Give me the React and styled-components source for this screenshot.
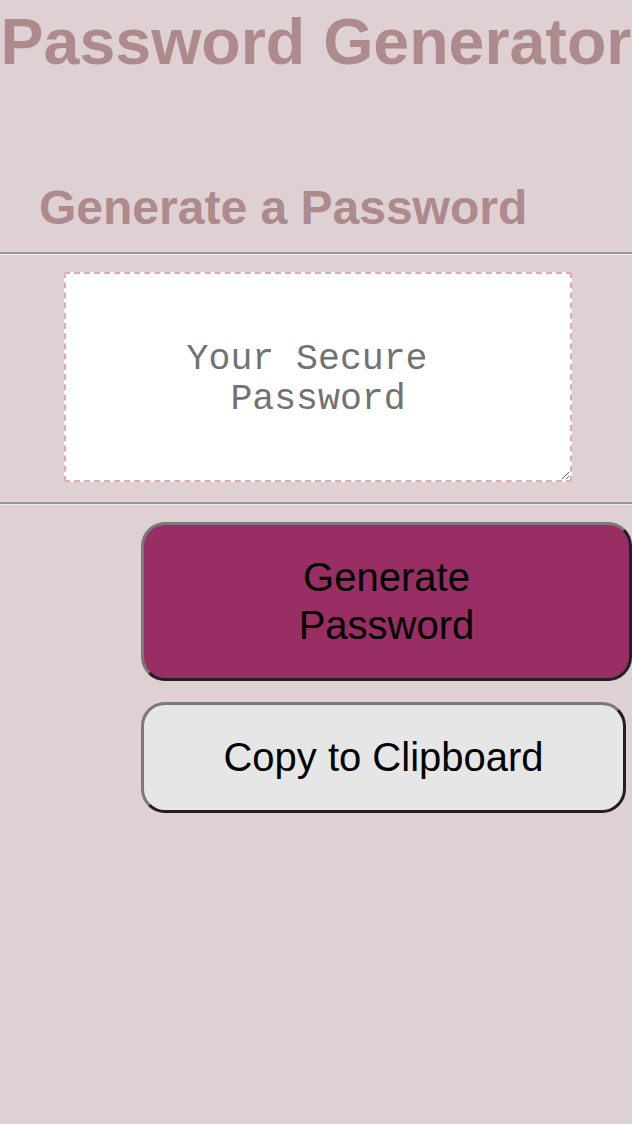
import React from "react";
import styled, { createGlobalStyle } from "styled-components";

const GlobalStyle = createGlobalStyle`
  *, *::before, *::after { box-sizing: border-box; }
  html, body { margin: 0; padding: 0; }
  body {
    background: #dfd1d3;
    font-family: "Liberation Sans", Arial, sans-serif;
    min-height: 1124px;
  }
`;

const Page = styled.div`
  display: flex;
  flex-direction: column;
`;

const Title = styled.h1`
  margin: 5px 0 0;
  font-size: 64.5px;
  font-weight: 700;
  text-align: center;
  color: #ad8a8b;
  white-space: nowrap;
`;

const Card = styled.section`
  margin-top: 101px;
  display: flex;
  flex-direction: column;
`;

const CardTitle = styled.h2`
  margin: 0 0 17px;
  padding-left: 39px;
  font-size: 48px;
  font-weight: 700;
  color: #ad8a8b;
`;

const Rule = styled.hr`
  margin: 0;
  height: 3px;
  width: 100%;
  border: none;
  border-top: 2px solid #9b9697;
  border-bottom: 1px solid #f1ecec;
`;

const Body = styled.div`
  padding: 17px 60px 20px 64px;
`;

const Output = styled.textarea`
  display: block;
  width: 508px;
  height: 210px;
  padding: 66px 40px 0;
  border: 2px dashed #e2abb2;
  border-radius: 2px;
  background: #ffffff;
  font-family: "Liberation Mono", "Courier New", monospace;
  font-size: 36.5px;
  line-height: 40px;
  text-align: center;
  color: #333;
  outline: none;
  &::placeholder { color: #727272; }
`;

const Footer = styled.div`
  display: flex;
  flex-direction: column;
  align-items: flex-start;
  gap: 21px;
  padding: 17px 0 0 141px;
`;

const Button = styled.button`
  width: ${(p) => p.$w}px;
  padding: 28px 30px 29px;
  border: 3px solid;
  border-color: #7c7778 #232022 #232022 #7c7778;
  border-radius: 24px;
  background: ${(p) => (p.$primary ? "#982e64" : "#e6e6e6")};
  color: #000;
  font-family: "Liberation Sans", Arial, sans-serif;
  font-size: 40px;
  line-height: 48px;
  text-align: center;
  cursor: pointer;
`;

export default function App() {
  return (
    <Page>
      <GlobalStyle />
      <Title>Password Generator</Title>
      <Card>
        <CardTitle>Generate a Password</CardTitle>
        <Rule />
        <Body>
          <Output
            readOnly
            placeholder={"Your Secure\u00a0 Password"}
            aria-label="Generated Password"
          />
        </Body>
        <Rule />
        <Footer>
          <Button $primary $w={491}>Generate<br />Password</Button>
          <Button $w={485}>Copy to Clipboard</Button>
        </Footer>
      </Card>
    </Page>
  );
}
